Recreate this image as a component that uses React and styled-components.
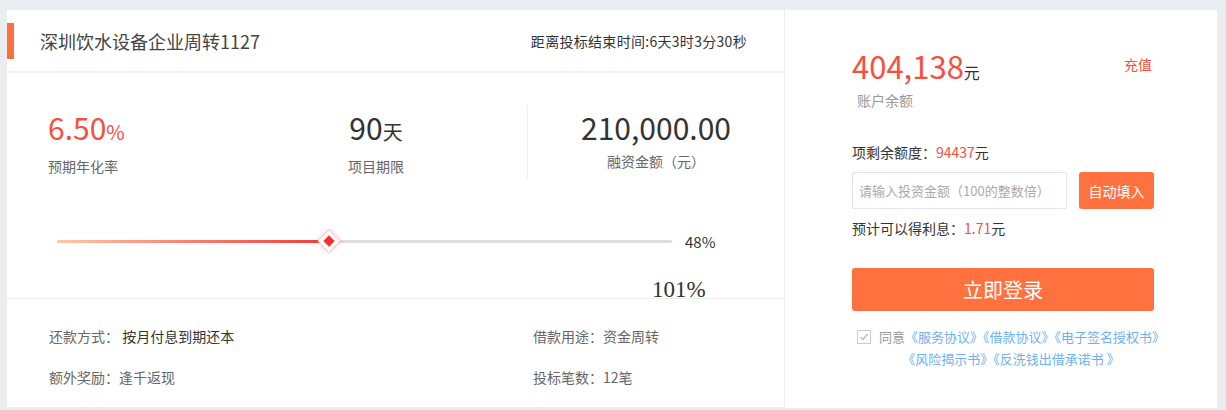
import styled, { createGlobalStyle } from "styled-components";

const GlobalStyle = createGlobalStyle`
  html, body {
    margin: 0;
    padding: 0;
    background: #e9edf0;
    font-family: "Microsoft YaHei", "Noto Sans CJK SC", sans-serif;
    color: #333;
  }
`;

const Page = styled.div`
  display: flex;
  width: 1210px;
  height: 398px;
  margin: 10px 0 0 7px;
  background: #fff;
`;

const Main = styled.div`
  width: 777px;
  border-right: 1px solid #eee;
  display: flex;
  flex-direction: column;
`;

const Header = styled.div`
  height: 61px;
  display: flex;
  align-items: center;
  justify-content: space-between;
  border-bottom: 2px solid #f0f1f2;
  padding-right: 37px;
`;

const TitleWrap = styled.div`
  display: flex;
  align-items: center;
`;

const Mark = styled.span`
  width: 7px;
  height: 36px;
  background: #ff6f3d;
  margin-right: 26px;
`;

const Title = styled.h1`
  margin: 0;
  font-size: 18px;
  font-weight: normal;
  color: #444;
`;

const Timer = styled.span`
  font-size: 14px;
  color: #333;
  letter-spacing: 0.3px;
`;

const Stats = styled.div`
  display: flex;
  margin-top: 32px;
`;

const Stat = styled.div`
  width: ${(p) => p.w}px;
  padding-left: ${(p) => p.pl || 0}px;
  box-sizing: border-box;
  text-align: ${(p) => p.align || "left"};
  margin-right: ${(p) => p.mr || 0}px;
  border-left: ${(p) => (p.divider ? "1px solid #eee" : "none")};
  height: 74px;
`;

const Value = styled.div`
  font-size: 30px;
  line-height: 44px;
  color: ${(p) => (p.red ? "#f5503e" : "#333")};
  white-space: nowrap;
  small {
    font-size: 20px;
  }
`;

const Label = styled.div`
  font-size: 14px;
  line-height: 24px;
  color: #666;
`;

const SliderRow = styled.div`
  display: flex;
  align-items: center;
  margin-top: 52px;
  padding-left: 50px;
`;

const Track = styled.div`
  position: relative;
  width: 615px;
  height: 3px;
  background: #ddd;
  border-radius: 2px;
`;

const Fill = styled.div`
  height: 3px;
  border-radius: 2px;
  background: linear-gradient(to right, #fdc6a6, #f2393a);
`;

const Thumb = styled.span`
  position: absolute;
  top: -7px;
  width: 16px;
  height: 16px;
  margin-left: -8px;
  box-sizing: border-box;
  background: #fa2d2d;
  border: 4px solid #fff;
  box-shadow: 0 0 4px rgba(245, 80, 62, 0.5);
  transform: rotate(45deg);
`;

const Percent = styled.span`
  margin-left: 13px;
  font-size: 15px;
  color: #333;
`;

const Stray = styled.div`
  font-family: "Liberation Serif", serif;
  font-size: 23px;
  line-height: 18px;
  color: #333;
  padding-left: 645px;
  margin-top: 29px;
`;

const Info = styled.div`
  border-top: 1px solid #eee;
  margin-top: -1px;
  flex: 1;
  display: grid;
  grid-template-columns: 484px 1fr;
  grid-auto-rows: 41px;
  padding: 17px 0 0 42px;
  font-size: 14px;
  color: #666;
  border-bottom: 1px solid #eee;
`;

const InfoItem = styled.div`
  line-height: 41px;
  b {
    font-weight: normal;
    color: #333;
  }
`;

const Side = styled.div`
  flex: 1;
  min-width: 0;
  padding: 0 63px 0 67px;
  display: flex;
  flex-direction: column;
`;

const BalanceRow = styled.div`
  display: flex;
  justify-content: space-between;
  margin-top: 38px;
`;

const Balance = styled.div`
  font-size: 31px;
  line-height: 36px;
  color: #f5503e;
  small {
    font-size: 16px;
    color: #333;
  }
`;

const Recharge = styled.a`
  font-size: 14px;
  color: #f5503e;
  margin-top: 6px;
  margin-right: 2px;
`;

const Muted = styled.div`
  font-size: 14px;
  color: #999;
  padding-left: 5px;
  line-height: 20px;
`;

const Line = styled.div`
  font-size: 14px;
  color: #333;
  line-height: 20px;
  margin-top: ${(p) => p.mt}px;
  em {
    font-style: normal;
    color: #f5503e;
  }
`;

const InputRow = styled.div`
  display: flex;
  justify-content: space-between;
  margin-top: 10px;
`;

const AmountInput = styled.input`
  width: 215px;
  height: 37px;
  box-sizing: border-box;
  border: 1px solid #e3e3f7;
  border-radius: 2px;
  padding: 0 6px;
  font-family: inherit;
  font-size: 13px;
  outline: none;
  &::placeholder {
    color: #aaa;
  }
`;

const Button = styled.button`
  border: none;
  border-radius: 3px;
  background: #ff7240;
  color: #fff;
  font-family: inherit;
  cursor: pointer;
  width: ${(p) => p.w}px;
  height: ${(p) => p.h}px;
  font-size: ${(p) => p.fs}px;
  padding: 0;
`;

const Login = styled(Button)`
  margin-top: 30px;
`;

const Agree = styled.div`
  margin: 15px -16px 0 0;
  text-align: center;
  font-size: 13px;
  line-height: 22px;
  color: #999;
  white-space: nowrap;
  a {
    color: #6eb1f2;
  }
`;

const Check = styled.span`
  display: inline-block;
  width: 12px;
  height: 12px;
  border: 1px solid #ccc;
  vertical-align: -2px;
  margin-right: 8px;
  position: relative;
  svg {
    position: absolute;
    left: 1px;
    top: 1px;
  }
`;

export default function App() {
  const progress = 44.2;
  return (
    <>
      <GlobalStyle />
      <Page>
        <Main>
          <Header>
            <TitleWrap>
              <Mark />
              <Title>深圳饮水设备企业周转1127</Title>
            </TitleWrap>
            <Timer>距离投标结束时间:6天3时3分30秒</Timer>
          </Header>
          <Stats>
            <Stat w={260} pl={41}>
              <Value red>
                6.50<small>%</small>
              </Value>
              <Label>预期年化率</Label>
            </Stat>
            <Stat w={218} align="center" mr={42}>
              <Value>
                90<small>天</small>
              </Value>
              <Label>项目期限</Label>
            </Stat>
            <Stat w={257} align="center" divider>
              <Value>210,000.00</Value>
              <Label>融资金额（元）</Label>
            </Stat>
          </Stats>
          <SliderRow>
            <Track>
              <Fill style={{ width: `${progress}%` }} />
              <Thumb style={{ left: `${progress}%` }} />
            </Track>
            <Percent>48%</Percent>
          </SliderRow>
          <Stray>101%</Stray>
          <Info>
            <InfoItem>
              还款方式： <b>按月付息到期还本</b>
            </InfoItem>
            <InfoItem>借款用途：资金周转</InfoItem>
            <InfoItem>额外奖励：逢千返现</InfoItem>
            <InfoItem>投标笔数：12笔</InfoItem>
          </Info>
        </Main>
        <Side>
          <BalanceRow>
            <Balance>
              404,138<small>元</small>
            </Balance>
            <Recharge>充值</Recharge>
          </BalanceRow>
          <Muted>账户余额</Muted>
          <Line mt={32}>
            项剩余额度：<em>94437</em>元
          </Line>
          <InputRow>
            <AmountInput placeholder="请输入投资金额（100的整数倍）" />
            <Button w={75} h={37} fs={14}>
              自动填入
            </Button>
          </InputRow>
          <Line mt={9}>
            预计可以得利息：<em>1.71</em>元
          </Line>
          <Login w={302} h={43} fs={20}>
            立即登录
          </Login>
          <Agree>
            <Check>
              <svg width="10" height="10" viewBox="0 0 10 10">
                <path d="M1.5 5l2.5 2.5L8.5 2" fill="none" stroke="#bbb" strokeWidth="1.3" />
              </svg>
            </Check>
            同意<a>《服务协议》</a><a>《借款协议》</a><a>《电子签名授权书》</a>
            <br />
            <a>《风险揭示书》</a><a>《反洗钱出借承诺书 》</a>
          </Agree>
        </Side>
      </Page>
    </>
  );
}
